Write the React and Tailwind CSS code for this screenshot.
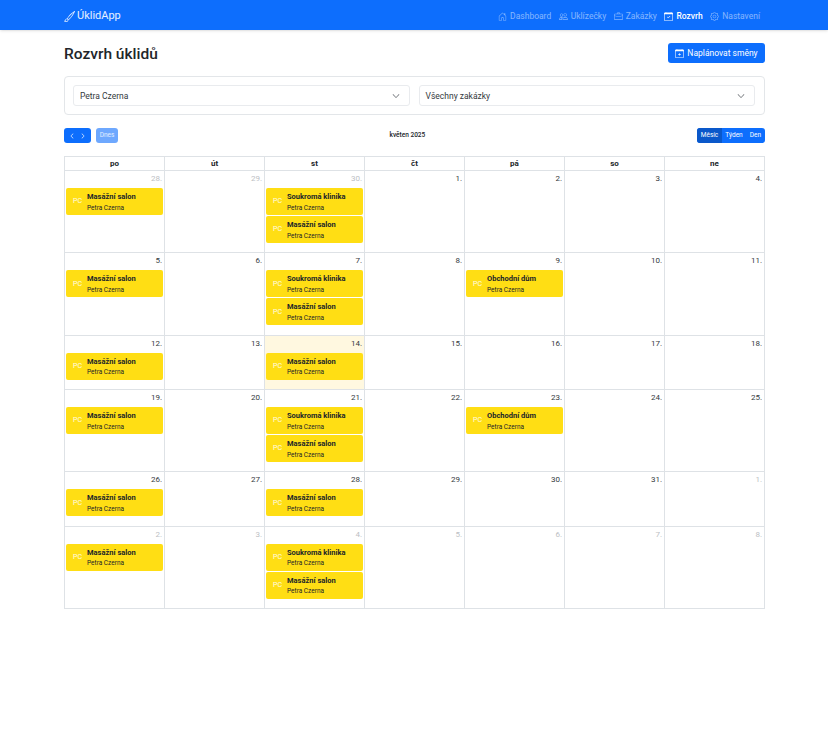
import React from 'react'
import { BsBrush, BsHouseDoor, BsPeople, BsBriefcase, BsCalendarCheck, BsGear, BsCalendarPlus, BsChevronLeft, BsChevronRight, BsChevronDown } from 'react-icons/bs'

const navItems = [
  { label: 'Dashboard', icon: BsHouseDoor },
  { label: 'Uklízečky', icon: BsPeople },
  { label: 'Zakázky', icon: BsBriefcase },
  { label: 'Rozvrh', icon: BsCalendarCheck, active: true },
  { label: 'Nastavení', icon: BsGear },
]

const M = 'Masážní salon'
const S = 'Soukromá klinika'
const O = 'Obchodní dům'

const weeks = [
  [[28, 1, [M]], [29, 1, []], [30, 1, [S, M]], [1], [2], [3], [4]],
  [[5, 0, [M]], [6], [7, 0, [S, M]], [8], [9, 0, [O]], [10], [11]],
  [[12, 0, [M]], [13], [14, 0, [M], true], [15], [16], [17], [18]],
  [[19, 0, [M]], [20], [21, 0, [S, M]], [22], [23, 0, [O]], [24], [25]],
  [[26, 0, [M]], [27], [28, 0, [M]], [29], [30], [31], [1, 1]],
  [[2, 1, [M]], [3, 1], [4, 1, [S, M]], [5, 1], [6, 1], [7, 1], [8, 1]],
]

function Event({ title }) {
  return (
    <div className="mx-[1px] mb-[1px] h-[27px] flex items-center bg-[#ffde14] rounded-[2px] pl-[7px]">
      <span className="w-[14px] text-[7px] text-white/90">PC</span>
      <div className="leading-none pt-[1px]">
        <div className="text-[7.5px] font-bold text-[#212529] mb-[4px]">{title}</div>
        <div className="text-[6.5px] text-[#212529]">Petra Czerna</div>
      </div>
    </div>
  )
}

function Select({ value }) {
  return (
    <div className="flex-1 h-[21px] border border-[#e9ebee] rounded-[3px] bg-white flex items-center justify-between pl-[6px] pr-[9px] pt-[1px] text-[8.5px] text-[#343a40]">
      {value}
      <BsChevronDown className="text-[8px]" />
    </div>
  )
}

export default function App() {
  return (
    <div className="min-h-[750px] bg-white text-[#212529] font-['Roboto',sans-serif]">
      <nav className="h-[30px] bg-[#0d6efd] shadow-sm">
        <div className="h-full mx-[64px] pt-[2px] flex items-center justify-between">
          <div className="flex items-center gap-[2px] text-white/90 text-[11px]">
            <BsBrush className="text-[11px]" />
            ÚklidApp
          </div>
          <div className="flex items-center gap-[7.5px] pr-[4px] text-[8.5px] text-white/50">
            {navItems.map(item => (
              <div key={item.label} className={item.active ? 'flex items-center gap-[3px] text-white font-medium' : 'flex items-center gap-[3px]'}>
                <item.icon className="text-[9px]" />
                {item.label}
              </div>
            ))}
          </div>
        </div>
      </nav>

      <main className="mx-[63px] pl-[1px]">
        <div className="flex justify-between pt-[13px]">
          <h1 className="mt-[1px] text-[15.5px] font-medium leading-[21px]">Rozvrh úklidů</h1>
          <button className="h-[20px] w-[97px] flex items-center justify-center gap-[3px] rounded-[3px] bg-[#0d6efd] text-white text-[8.5px]">
            <BsCalendarPlus className="text-[9px]" />
            Naplánovat směny
          </button>
        </div>

        <div className="mt-[11px] h-[39px] border border-[#e3e6e9] rounded-[4px] flex items-center gap-[9px] pl-[8px] pr-[9px]">
          <Select value="Petra Czerna" />
          <Select value="Všechny zakázky" />
        </div>

        <div className="mt-[13px] h-[15px] flex items-center justify-between text-[6.5px]">
          <div className="flex gap-[5px]">
            <div className="w-[27px] h-[15px] rounded-[3px] bg-[#0d6efd] text-white flex items-center justify-around text-[6px] px-[2px]">
              <BsChevronLeft />
              <BsChevronRight />
            </div>
            <div className="w-[22px] h-[15px] rounded-[3px] bg-[#6ea8fe] text-white/80 flex items-center justify-center">Dnes</div>
          </div>
          <div className="font-medium">květen 2025</div>
          <div className="flex h-[15px] rounded-[3px] bg-[#0d6efd] overflow-hidden text-white items-center">
            <span className="h-full flex items-center px-[4px] bg-[#0a58ca]">Měsíc</span>
            <span className="px-[3px]">Týden</span>
            <span className="px-[4px]">Den</span>
          </div>
        </div>

        <div className="mt-[13px] border-l border-t border-[#dee2e6] grid grid-cols-7">
          {['po', 'út', 'st', 'čt', 'pá', 'so', 'ne'].map(d => (
            <div key={d} className="h-[14px] border-r border-b border-[#dee2e6] flex items-center justify-center text-[8px] font-bold">{d}</div>
          ))}
          {weeks.flat().map(([day, muted, events = [], today], i) => (
            <div key={i} className={`border-r border-b border-[#dee2e6] pb-[8.35px] ${today ? 'bg-[#fff8e0]' : ''}`}>
              <div className={`h-[17px] pr-[2px] pt-[2px] text-right text-[8px] leading-[12px] ${muted ? 'text-[#bcc0c4]' : 'text-[#343a40]'}`}>{day}.</div>
              {events.map(t => <Event key={t} title={t} />)}
            </div>
          ))}
        </div>
      </main>
    </div>
  )
}
